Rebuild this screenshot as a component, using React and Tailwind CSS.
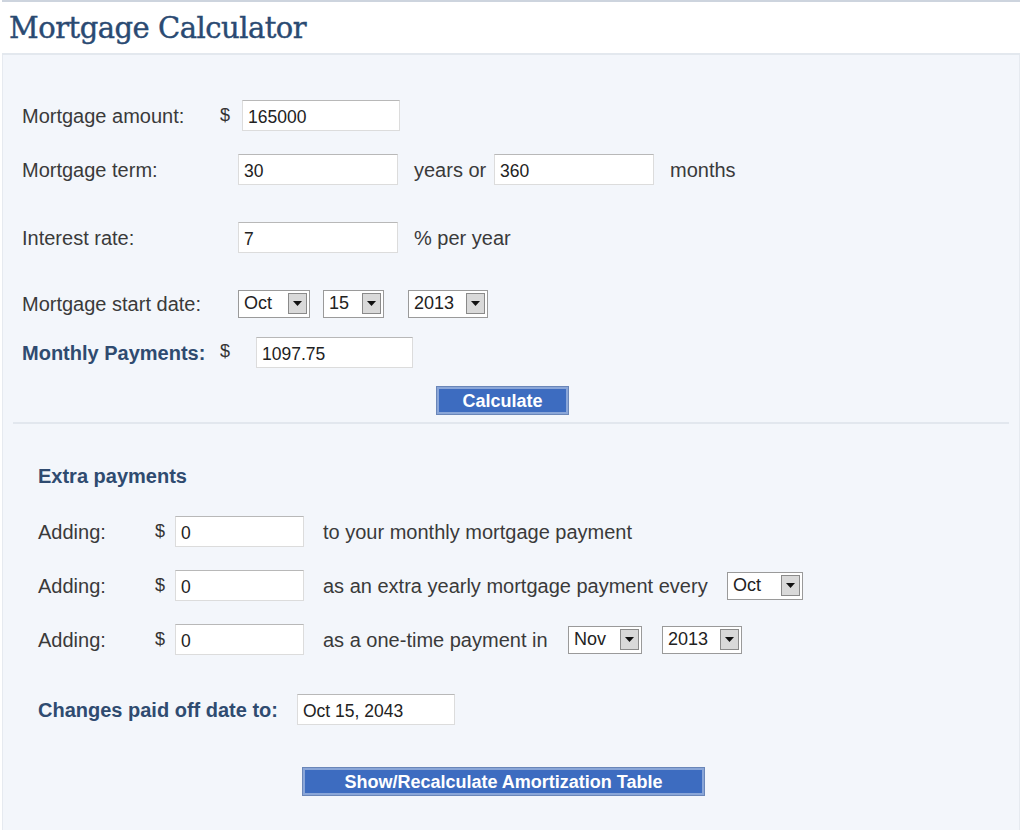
import React from 'react';

const Field = ({ value, w }) => (
  <div
    className={`h-[31px] bg-white border border-[#dcdcdc] border-t-[#b8b8b8] flex items-center px-[5px] pt-[3px] text-[17.5px] text-[#222] ${w}`}
  >
    {value}
  </div>
);

const Select = ({ value, w }) => (
  <div className={`h-[28px] bg-white border border-[#9a9a9a] flex items-center justify-between pl-[5px] pr-[2px] text-[18px] text-[#222] ${w}`}>
    <span>{value}</span>
    <span className="w-[19px] h-[21px] bg-[#d9d9d9] border border-[#8a8a8a] flex items-center justify-center">
      <svg width="9" height="5" viewBox="0 0 9 5">
        <path d="M0 0h9L4.5 5z" fill="#111" />
      </svg>
    </span>
  </div>
);

const Label = ({ children, w }) => (
  <div className={`shrink-0 text-[20px] text-[#3a3a3a] ${w}`}>{children}</div>
);

const Blue = ({ children, w }) => (
  <div className={`shrink-0 text-[20px] font-bold text-[#2f4b70] ${w}`}>{children}</div>
);

const Button = ({ children, w }) => (
  <button className={`h-[27px] bg-[#3d6cc0] border-2 border-[#8aa6d8] outline outline-1 outline-[#6a86b8] text-white font-bold text-[18px] leading-none ${w}`}>
    {children}
  </button>
);

export default function App() {
  return (
    <div className="w-[1024px] h-[840px] bg-white font-['Liberation_Sans',Arial,sans-serif] overflow-hidden">
      <div className="w-[1018px] ml-[2px] border-t-2 border-[#cdd4de]">
        <div className="h-[53px] bg-white border-b-2 border-[#e3e8ee] flex items-center pl-[7px]">
          <h1 className="font-['DejaVu_Serif',Georgia,serif] text-[29px] text-[#2a4a72] tracking-[-0.5px] leading-none pt-[1px] [-webkit-text-stroke:0.4px_#2a4a72]">
            Mortgage Calculator
          </h1>
        </div>
        <div className="bg-[#f3f6fb] h-[775px] border-l border-r border-[#e6eaf0] pt-[45px]">
          <div className="pl-[19px]">
            <div className="flex items-center h-[31px]">
              <Label w="w-[198px]">Mortgage amount:</Label>
              <span className="text-[18px] text-[#333] w-[22px]">$</span>
              <Field value="165000" w="w-[158px]" />
            </div>
            <div className="flex items-center h-[31px] mt-[23px]">
              <Label w="w-[216px]">Mortgage term:</Label>
              <Field value="30" w="w-[160px]" />
              <span className="text-[20px] text-[#3a3a3a] ml-[16px] w-[80px]">years or</span>
              <Field value="360" w="w-[160px]" />
              <span className="text-[20px] text-[#3a3a3a] ml-[16px]">months</span>
            </div>
            <div className="flex items-center h-[31px] mt-[37px]">
              <Label w="w-[216px]">Interest rate:</Label>
              <Field value="7" w="w-[160px]" />
              <span className="text-[20px] text-[#3a3a3a] ml-[16px]">% per year</span>
            </div>
            <div className="flex items-center h-[31px] mt-[35px]">
              <Label w="w-[216px]">Mortgage start date:</Label>
              <Select value="Oct" w="w-[72px]" />
              <div className="w-[13px]" />
              <Select value="15" w="w-[61px]" />
              <div className="w-[24px]" />
              <Select value="2013" w="w-[80px]" />
            </div>
            <div className="flex items-center h-[31px] mt-[18px]">
              <Blue w="w-[198px]">Monthly Payments:</Blue>
              <span className="text-[18px] text-[#333] w-[36px] -mt-[2px]">$</span>
              <Field value="1097.75" w="w-[157px]" />
            </div>
            <div className="mt-[19px] ml-[415px]">
              <Button w="w-[131px]">Calculate</Button>
            </div>
          </div>
          <div className="mx-[10px] mt-[8px] border-t-2 border-[#e2e7ee]" />
          <div className="pl-[35px]">
            <Blue w="mt-[41px] h-[22px] leading-[22px]">Extra payments</Blue>
            <div className="flex items-center h-[31px] mt-[29px]">
              <Label w="w-[117px]">Adding:</Label>
              <span className="text-[18px] text-[#333] w-[20px]">$</span>
              <Field value="0" w="w-[129px]" />
              <span className="text-[20px] text-[#3a3a3a] ml-[19px]">to your monthly mortgage payment</span>
            </div>
            <div className="flex items-center h-[31px] mt-[23px]">
              <Label w="w-[117px]">Adding:</Label>
              <span className="text-[18px] text-[#333] w-[20px]">$</span>
              <Field value="0" w="w-[129px]" />
              <span className="text-[20px] text-[#3a3a3a] ml-[19px] w-[404px]">as an extra yearly mortgage payment every</span>
              <Select value="Oct" w="w-[76px]" />
            </div>
            <div className="flex items-center h-[31px] mt-[23px]">
              <Label w="w-[117px]">Adding:</Label>
              <span className="text-[18px] text-[#333] w-[20px]">$</span>
              <Field value="0" w="w-[129px]" />
              <span className="text-[20px] text-[#3a3a3a] ml-[19px] w-[245px]">as a one-time payment in</span>
              <Select value="Nov" w="w-[74px]" />
              <div className="w-[20px]" />
              <Select value="2013" w="w-[80px]" />
            </div>
            <div className="flex items-center h-[31px] mt-[39px]">
              <Blue w="w-[259px]">Changes paid off date to:</Blue>
              <Field value="Oct 15, 2043" w="w-[158px]" />
            </div>
            <div className="mt-[43px] ml-[265px]">
              <Button w="w-[401px]">Show/Recalculate Amortization Table</Button>
            </div>
          </div>
        </div>
      </div>
    </div>
  );
}
